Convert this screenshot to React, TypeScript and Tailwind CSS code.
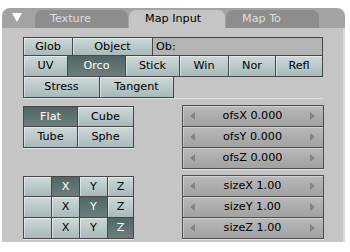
import React from "react";

// Blender 2.4x style "Map Input" texture panel

const Tog = ({
  label,
  on,
  className,
}: {
  label?: string;
  on?: boolean;
  className: string;
}) => (
  <div
    className={`flex items-center justify-center border-r border-b border-[#474747] ${
      on
        ? "bg-linear-to-b from-[#526666] to-[#6c7e7e] text-white"
        : "bg-linear-to-b from-[#cdd9d9] to-[#a8b9b9] text-black shadow-[inset_1px_1px_0_rgba(255,255,255,0.45)]"
    } ${className}`}
  >
    {label}
  </div>
);

const Arrow = ({ right }: { right?: boolean }) => (
  <svg width="5" height="8" viewBox="0 0 5 8" aria-hidden="true">
    <path d={right ? "M0 0 L5 4 L0 8 Z" : "M5 0 L0 4 L5 8 Z"} fill="#848484" />
  </svg>
);

const Num = ({ label }: { label: string }) => (
  <div className="flex h-[21px] items-center justify-between border-r border-b border-[#4d4d4d] bg-linear-to-b from-[#b9b9b9] to-[#a1a1a1] pl-[7px] pr-[8px] shadow-[inset_1px_1px_0_rgba(255,255,255,0.35)]">
    <Arrow />
    <span className="text-black">{label}</span>
    <Arrow right />
  </div>
);

const axisRows = [
  ["X", "Y", "Z"],
  ["X", "Y", "Z"],
  ["X", "Y", "Z"],
];

export default function App() {
  return (
    <div className="h-[252px] w-[350px] overflow-hidden bg-white pl-[2px] pt-[8px] font-['DejaVu_Sans',sans-serif] text-[11.2px] leading-none">
      {/* Header with tabs */}
      <div className="flex h-[20px] w-[343px] items-end rounded-t-[8px] bg-[#a3a3a3] pl-[10px]">
        <svg width="10" height="9" viewBox="0 0 10 9" className="mb-[6px] self-end" aria-hidden="true">
          <path d="M0 0 H10 L5 9 Z" fill="#ffffff" />
        </svg>
        <div className="ml-[13px] flex h-[18px] gap-px">
          <div className="flex w-[93px] items-center rounded-t-[7px] bg-[#8d8d8d] pl-[15px] text-[#dedede]">
            Texture
          </div>
          <div className="flex w-[96px] items-center rounded-t-[7px] bg-[#c6c5c5] pl-[16px] text-black">
            Map Input
          </div>
          <div className="flex w-[93px] items-center rounded-t-[7px] bg-[#8d8d8d] pl-[16px] text-[#dedede]">
            Map To
          </div>
        </div>
      </div>

      {/* Panel body */}
      <div className="h-[214px] w-[343px] border-r-[2px] border-[#dadada] bg-[#c6c5c5] pl-[21px] pt-[9px]">
        {/* Coordinates */}
        <div className="flex w-fit flex-col items-start border-l border-t border-[#474747] shadow-[0_1px_0_rgba(255,255,255,0.5)]">
          <div className="flex h-[18px]">
            <Tog label="Glob" className="w-[49px]" />
            <Tog label="Object" className="w-[80px]" />
            <div className="flex w-[170px] items-center border-r border-b border-[#474747] bg-[#b5b4b4] pl-[3px] text-black">
              Ob:
            </div>
          </div>
          <div className="flex h-[21px]">
            <Tog label="UV" className="w-[44px]" />
            <Tog label="Orco" on className="w-[58px]" />
            <Tog label="Stick" className="w-[54px]" />
            <Tog label="Win" className="w-[49px]" />
            <Tog label="Nor" className="w-[47px]" />
            <Tog label="Refl" className="w-[47px]" />
          </div>
          <div className="flex h-[21px]">
            <Tog label="Stress" className="w-[76px]" />
            <Tog label="Tangent" className="w-[74px]" />
          </div>
        </div>

        {/* Projection + offset */}
        <div className="mt-[7px] flex">
          <div className="w-[159px] pt-px">
            <div className="w-fit border-l border-t border-[#474747] shadow-[0_1px_0_rgba(255,255,255,0.5)]">
              <div className="flex h-[20px]">
                <Tog label="Flat" on className="w-[54px]" />
                <Tog label="Cube" className="w-[56px]" />
              </div>
              <div className="flex h-[21px]">
                <Tog label="Tube" className="w-[54px]" />
                <Tog label="Sphe" className="w-[56px]" />
              </div>
            </div>
          </div>
          <div className="w-[142px] border-l border-t border-[#4d4d4d] shadow-[0_1px_0_rgba(255,255,255,0.5)]">
            <Num label="ofsX 0.000" />
            <Num label="ofsY 0.000" />
            <Num label="ofsZ 0.000" />
          </div>
        </div>

        {/* Axis mapping + size */}
        <div className="mt-[6px] flex">
          <div className="w-[159px] pt-px">
            <div className="w-fit border-l border-t border-[#474747] shadow-[0_1px_0_rgba(255,255,255,0.5)]">
              {axisRows.map((row, i) => (
                <div key={i} className={`flex ${i === 0 ? "h-[20px]" : "h-[21px]"}`}>
                  <Tog className="w-[28px]" />
                  <Tog label={row[0]} on={i === 0} className="w-[28px]" />
                  <Tog label={row[1]} on={i === 1} className="w-[28px]" />
                  <Tog label={row[2]} on={i === 2} className="w-[26px]" />
                </div>
              ))}
            </div>
          </div>
          <div className="w-[142px] border-l border-t border-[#4d4d4d] shadow-[0_1px_0_rgba(255,255,255,0.5)]">
            <Num label="sizeX 1.00" />
            <Num label="sizeY 1.00" />
            <Num label="sizeZ 1.00" />
          </div>
        </div>
      </div>
    </div>
  );
}
